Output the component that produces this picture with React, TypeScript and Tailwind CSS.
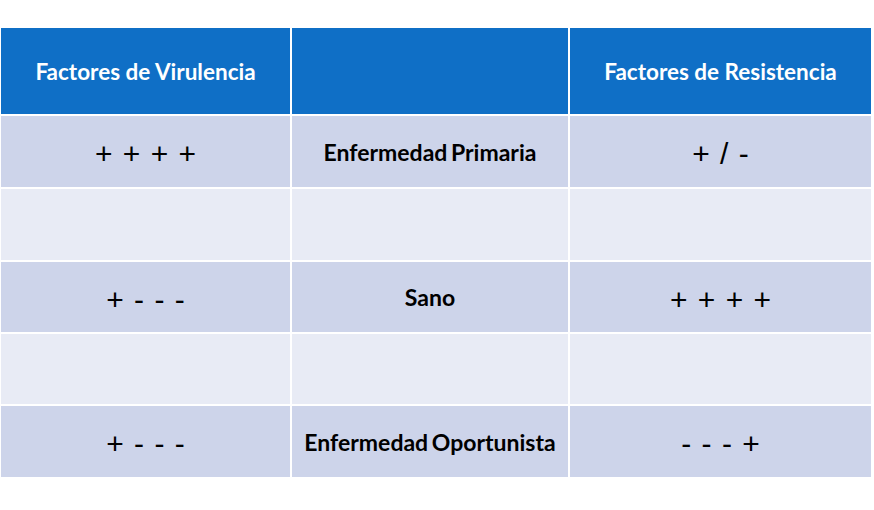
import React from "react";

const rows: { a: string; b: string; c: string; dark: boolean }[] = [
  { a: "+ + + +", b: "Enfermedad Primaria", c: "+ / -", dark: true },
  { a: "", b: "", c: "", dark: false },
  { a: "+ - - -", b: "Sano", c: "+ + + +", dark: true },
  { a: "", b: "", c: "", dark: false },
  { a: "+ - - -", b: "Enfermedad Oportunista", c: "- - - +", dark: true },
];

const heights = ["h-[71px]", "h-[71px]", "h-[70px]", "h-[70px]", "h-[71px]"];

export default function App() {
  return (
    <div className="w-[874px] h-[510px] bg-white pt-[28px] pl-[1px]">
      <div
        className="grid w-[870px] grid-cols-[289px_276px_301px] gap-[2px] bg-white"
        style={{ fontFamily: "Lato, 'Open Sans', sans-serif" }}
      >
        <div className="h-[86px] bg-[#0f6fc6] flex items-center justify-center text-white font-bold text-[22.5px] pt-[2px]">
          Factores de Virulencia
        </div>
        <div className="h-[86px] bg-[#0f6fc6]" />
        <div className="h-[86px] bg-[#0f6fc6] flex items-center justify-center text-white font-bold text-[22.5px] pt-[2px]">
          Factores de Resistencia
        </div>
        {rows.map((r, i) => (
          <React.Fragment key={i}>
            <div
              className={`${heights[i]} ${r.dark ? "bg-[#cdd4ea]" : "bg-[#e8ebf5]"} flex items-center justify-center text-black text-[30px] [word-spacing:2px] pt-[4px]`}
              style={{ fontFamily: "'Liberation Sans', Arial, sans-serif" }}
            >
              {r.a}
            </div>
            <div
              className={`${heights[i]} ${r.dark ? "bg-[#cdd4ea]" : "bg-[#e8ebf5]"} flex items-center justify-center text-black font-bold text-[23px] [word-spacing:-2px] pt-[1px]`}
            >
              {r.b}
            </div>
            <div
              className={`${heights[i]} ${r.dark ? "bg-[#cdd4ea]" : "bg-[#e8ebf5]"} flex items-center justify-center text-black text-[30px] [word-spacing:2px] pt-[4px]`}
              style={{ fontFamily: "'Liberation Sans', Arial, sans-serif" }}
            >
              {r.c}
            </div>
          </React.Fragment>
        ))}
      </div>
    </div>
  );
}
